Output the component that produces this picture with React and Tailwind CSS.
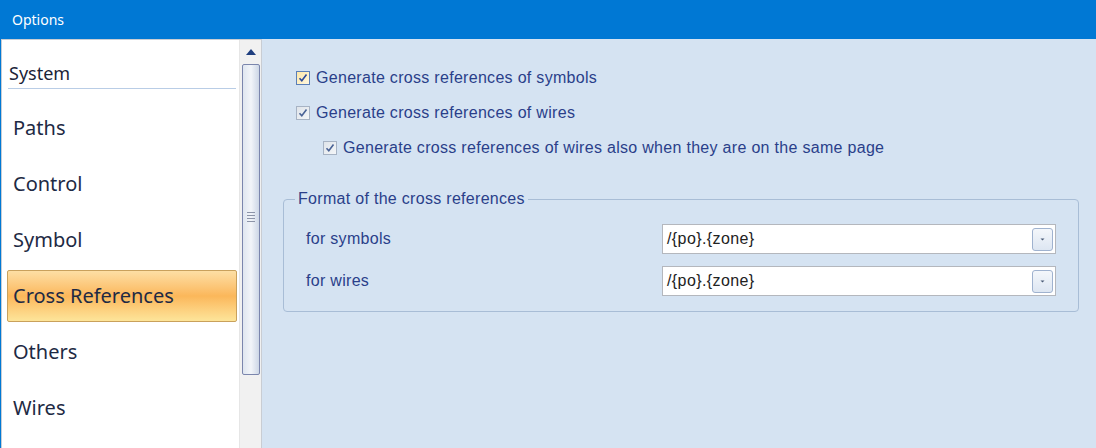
import React from "react";

const items = ["Paths", "Control", "Symbol", "Cross References", "Others", "Wires"];

function Check({ highlight }) {
  return (
    <span
      className={`flex h-[14px] w-[14px] shrink-0 items-center justify-center border ${
        highlight ? "border-[#5b7fb8] bg-gradient-to-br from-[#fde7a8] to-[#fff7df]" : "border-[#a7b3c4] bg-gradient-to-br from-[#dfe4ea] to-[#f4f6f8]"
      }`}
    >
      <svg width="10" height="10" viewBox="0 0 10 10">
        <path d="M1.5 5.2 L3.8 7.8 L8.5 1.5" fill="none" stroke={highlight ? "#2c4a9a" : "#4a6396"} strokeWidth="1.6" />
      </svg>
    </span>
  );
}

function Combo() {
  return (
    <div className="flex h-[30px] w-[394px] items-center justify-between border border-[#b4b7bd] bg-white pl-[4px] pr-[2px] text-[16px] tracking-[0.4px] text-[#222]">
      <span>/&#123;po&#125;.&#123;zone&#125;</span>
      <span className="flex h-[23px] w-[21px] items-center justify-center rounded-[3px] border border-[#9fb2cf] bg-gradient-to-b from-[#f4f7fb] to-[#dde6f2]">
        <svg width="7" height="5" viewBox="0 0 7 5">
          <path d="M1.5 1.5 L3.5 3.5 L5.5 1.5 Z" fill="#4a5a76" />
        </svg>
      </span>
    </div>
  );
}

export default function App() {
  return (
    <div className="flex h-[448px] w-[1096px] flex-col overflow-hidden bg-[#d5e3f2]" style={{ fontFamily: "'Liberation Sans', Arial, sans-serif" }}>
      <div className="flex h-[39px] shrink-0 items-center bg-[#0078d4] pl-[12px] text-[14px] text-white" style={{ fontFamily: "'Noto Sans', sans-serif" }}>
        Options
      </div>
      <div className="flex min-h-0 flex-1 border-l border-[#0078d4]">
        <div className="flex w-[261px] shrink-0 border-l border-t border-r border-[#c9cdd3] bg-white" style={{ fontFamily: "'Noto Sans', sans-serif" }}>
          <div className="flex-1 pl-[5px] pr-[2px] pt-[21px]">
            <div className="mx-[1px] border-b border-[#b9cde6] pb-[3px] pl-[1px] text-[18px] leading-[24px] text-[#1b2438]">System</div>
            <div className="mt-[11px]">
              {items.map((it) =>
                it === "Cross References" ? (
                  <div
                    key={it}
                    className="my-[2px] flex h-[52px] items-center rounded-[2px] border border-[#c9a15c] bg-gradient-to-b from-[#fddfa4] via-[#fbb75a] to-[#fde59a] pl-[5px] text-[20px] text-[#1e2a44]"
                  >
                    {it}
                  </div>
                ) : (
                  <div key={it} className="flex h-[56px] items-center pl-[6px] text-[20px] text-[#1e2a44]">
                    {it}
                  </div>
                )
              )}
            </div>
          </div>
          <div className="flex w-[22px] shrink-0 flex-col items-center border-l border-[#e6e6e6] bg-[#f1f1f1] pt-[9px]">
            <svg width="10" height="6" viewBox="0 0 10 6">
              <path d="M0 6 L5 0 L10 6 Z" fill="#1f3f7f" />
            </svg>
            <div className="mt-[9px] flex h-[311px] w-[18px] flex-col items-center justify-start rounded-[2px] border border-[#7b86ad] bg-gradient-to-r from-[#dfe6f0] via-[#f2f5f9] to-[#cdd7e6] pt-[147px]">
              <div className="flex flex-col gap-[2px]">
                <div className="h-px w-[8px] bg-[#8c94a8]" />
                <div className="h-px w-[8px] bg-[#8c94a8]" />
                <div className="h-px w-[8px] bg-[#8c94a8]" />
                <div className="h-px w-[8px] bg-[#8c94a8]" />
              </div>
            </div>
          </div>
        </div>
        <div className="flex-1 pl-[21px] pr-[17px] pt-[31px] text-[16px] tracking-[0.3px] text-[#2a3f8a]">
          <div className="flex flex-col gap-[19px]">
            <label className="flex h-[16px] items-center gap-[6px] pl-[13px]">
              <Check highlight />
              <span>Generate cross references of symbols</span>
            </label>
            <label className="flex h-[16px] items-center gap-[6px] pl-[13px]">
              <Check />
              <span>Generate cross references of wires</span>
            </label>
            <label className="flex h-[16px] items-center gap-[6px] pl-[40px]">
              <Check />
              <span>Generate cross references of wires also when they are on the same page</span>
            </label>
          </div>
          <fieldset className="mt-[31px] h-[125px] rounded-[4px] border border-[#a8bdd6] px-[22px] pt-[13px]">
            <legend className="ml-[-11px] px-[3px]">Format of the cross references</legend>
            <div className="flex items-center justify-between">
              <span>for symbols</span>
              <Combo />
            </div>
            <div className="mt-[12px] flex items-center justify-between">
              <span>for wires</span>
              <Combo />
            </div>
          </fieldset>
        </div>
      </div>
    </div>
  );
}
